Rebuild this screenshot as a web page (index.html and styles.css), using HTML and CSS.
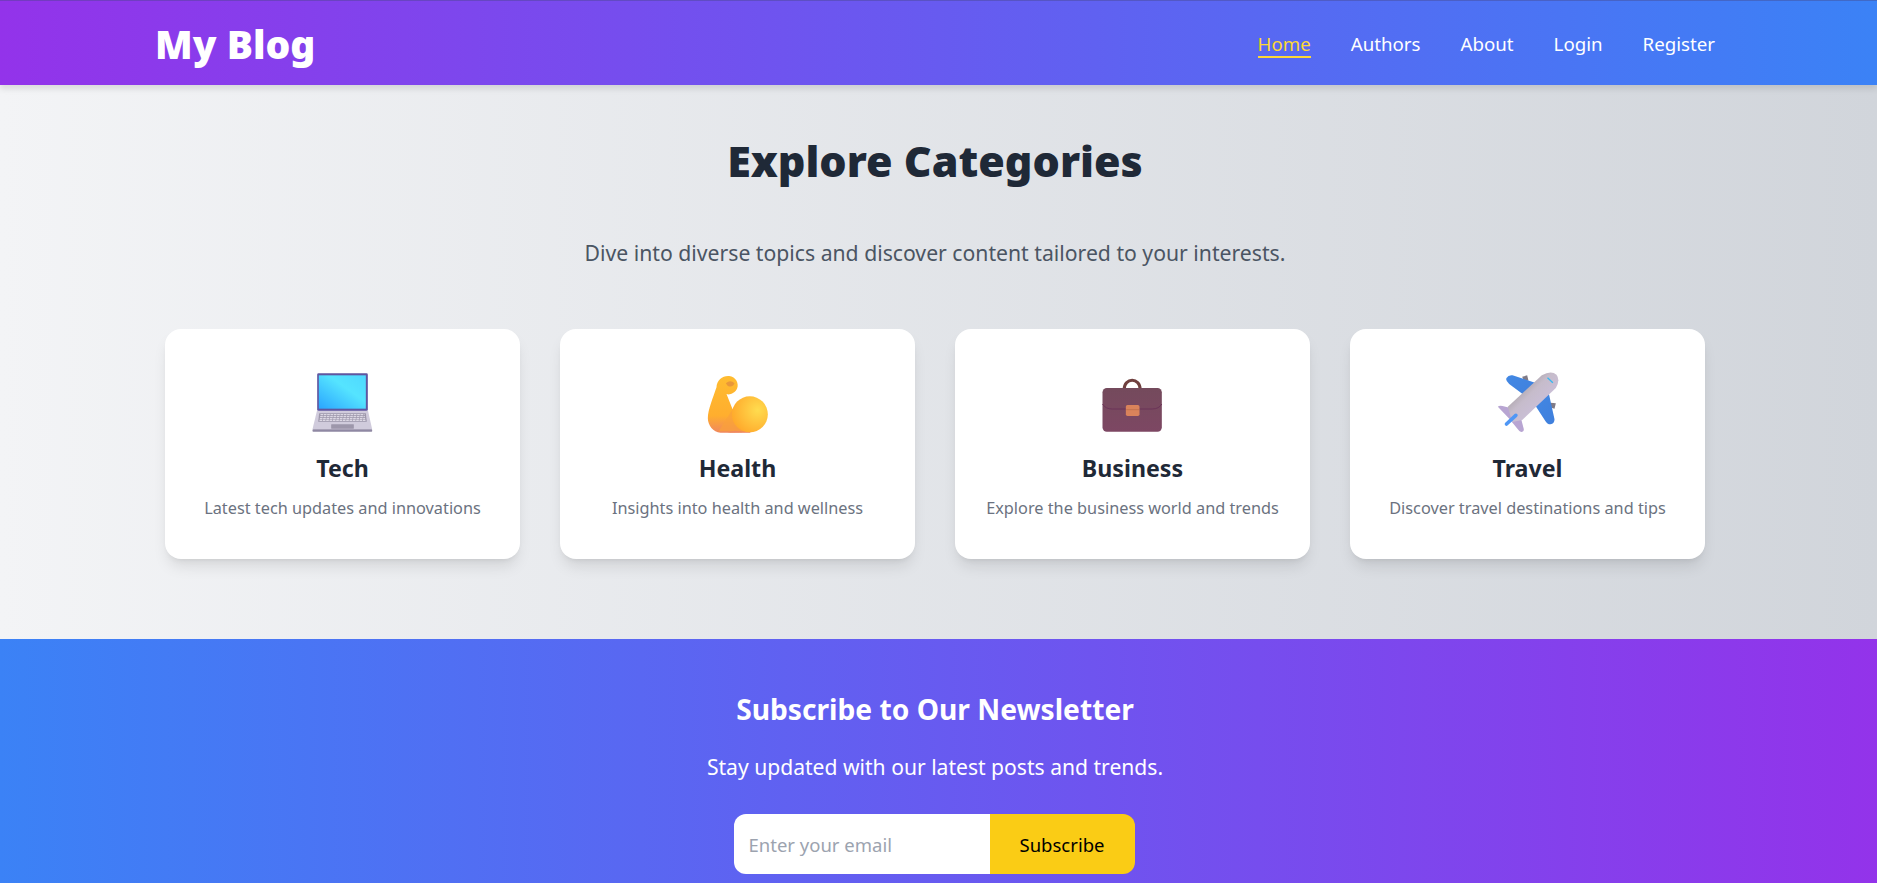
FILE: index.html
```html
<!DOCTYPE html>
<html>
<head>
  <title>My Blog</title>
  <meta charset="utf-8">
  <link rel="stylesheet" href="styles.css">
</head>
<body>
  <header class="topbar">
    <div class="topbar-inner">
      <a class="logo" href="#">My Blog</a>
      <nav class="nav">
        <a class="nav-link active" href="#">Home</a>
        <a class="nav-link" href="#">Authors</a>
        <a class="nav-link" href="#">About</a>
        <a class="nav-link" href="#">Login</a>
        <a class="nav-link" href="#">Register</a>
      </nav>
    </div>
  </header>

  <main class="categories">
    <h1 class="categories-title">Explore Categories</h1>
    <p class="categories-sub">Dive into diverse topics and discover content tailored to your interests.</p>
    <div class="card-grid">
      <div class="card">
        <svg class="card-icon" viewBox="64.5 24 186 198">
          <defs>
            <linearGradient id="screen" x1="0" y1="1" x2="1" y2="0">
              <stop offset="0" stop-color="#2aa5ff"/>
              <stop offset="0.6" stop-color="#55e4ff"/>
              <stop offset="1" stop-color="#4fd8ff"/>
            </linearGradient>
          </defs>
          <path d="M80 150 L232 150 L245 208 L66 208 Z" fill="#d0cbdc"/>
          <rect x="66" y="208" width="179" height="7" rx="2" fill="#8f88a3"/>
          <rect x="80" y="40" width="152" height="112" rx="4" fill="#5f56a0"/>
          <rect x="85" y="46" width="141" height="100" fill="url(#screen)"/>
          <path d="M86 160 L226 160 L229 185 L83 185 Z" fill="#9d97ab"/>
          <path d="M90 164 H222 M89 170 H223 M88 176 H224 M87 181 H225" stroke="#dcd8e4" stroke-width="4" stroke-dasharray="8 2"/>
          <rect x="122" y="193" width="68" height="13" rx="1" fill="#9d97ab"/>
        </svg>
        <h3 class="card-title">Tech</h3>
        <p class="card-text">Latest tech updates and innovations</p>
      </div>
      <div class="card">
        <svg class="card-icon" viewBox="49.5 24 186 198">
          <defs>
            <linearGradient id="arm" x1="0" y1="0" x2="0" y2="1">
              <stop offset="0" stop-color="#ffbc30"/>
              <stop offset="0.7" stop-color="#ffae2e"/>
              <stop offset="1" stop-color="#f0885e"/>
            </linearGradient>
            <radialGradient id="ball" cx="0.72" cy="0.38" r="0.75">
              <stop offset="0" stop-color="#ffdc4f"/>
              <stop offset="1" stop-color="#ffa92b"/>
            </radialGradient>
          </defs>
          <path d="M52 175 C52 150 68 112 78 82 C78 60 98 46 116 48 C136 50 146 70 140 85 C134 100 116 106 108 102 L125 145 L180 218 L90 218 C68 218 52 195 52 175 Z" fill="url(#arm)"/>
          <path d="M125 150 L168 214 L84 214 Z" fill="#f9a13a" opacity="0.7"/>
          <circle cx="178" cy="163" r="54" fill="url(#ball)"/>
          <path d="M135 212 Q165 220 185 217 L110 218 Z" fill="#f0885e" opacity="0.9"/>
          <path d="M106 70 Q120 58 132 70 Q126 84 112 78 Z" fill="#e9973a"/>
        </svg>
        <h3 class="card-title">Health</h3>
        <p class="card-text">Insights into health and wellness</p>
      </div>
      <div class="card">
        <svg class="card-icon" viewBox="49.5 24 186 198">
          <defs>
            <linearGradient id="case" x1="0" y1="0" x2="0" y2="1">
              <stop offset="0" stop-color="#744a5c"/>
              <stop offset="1" stop-color="#7d4763"/>
            </linearGradient>
          </defs>
          <path d="M116 88 C116 52 164 52 164 88" fill="none" stroke="#6f3f3e" stroke-width="9"/>
          <rect x="51" y="84" width="178" height="131" rx="13" fill="url(#case)"/>
          <path d="M51 132 Q60 147 80 147 H200 Q220 147 229 132" fill="none" stroke="#6b3358" stroke-width="3"/>
          <rect x="121" y="135" width="41" height="33" rx="5" fill="#d9835b"/>
          <path d="M122 149 H161" stroke="#b96a48" stroke-width="2"/>
        </svg>
        <h3 class="card-title">Business</h3>
        <p class="card-text">Explore the business world and trends</p>
      </div>
      <div class="card">
        <svg class="card-icon" viewBox="49.5 24 186 198">
          <defs>
            <linearGradient id="body" x1="0.15" y1="0.15" x2="0.8" y2="0.8">
              <stop offset="0" stop-color="#9a9494"/>
              <stop offset="0.45" stop-color="#c6bccb"/>
              <stop offset="1" stop-color="#cdc1de"/>
            </linearGradient>
            <linearGradient id="wing" x1="0" y1="0" x2="1" y2="1">
              <stop offset="0" stop-color="#4288e4"/>
              <stop offset="1" stop-color="#3f7fdc"/>
            </linearGradient>
          </defs>
          <path d="M125 50 L140 46 L144 62 L130 62 Z M210 128 L226 130 L222 146 L208 142 Z" fill="#7f7a86"/>
          <path d="M78 54 Q84 44 96 46 L175 72 L140 112 L86 72 Q74 62 78 54 Z" fill="url(#wing)"/>
          <path d="M160 130 L204 96 L222 178 Q222 192 210 193 Q200 193 194 182 Z" fill="url(#wing)"/>
          <path d="M52 140 Q56 136 66 138 L115 150 L130 208 Q130 216 122 216 Q116 214 112 208 L85 175 Z" fill="#b8a5d2"/>
          <path d="M184 46 Q212 30 228 44 Q240 60 226 84 L125 180 L95 186 L82 140 Z" fill="url(#body)"/>
          <path d="M78 192 L106 166" stroke="#4f97f5" stroke-width="11" stroke-linecap="round"/>
          <path d="M201 53 L217 68" stroke="#35b8f0" stroke-width="4"/>
        </svg>
        <h3 class="card-title">Travel</h3>
        <p class="card-text">Discover travel destinations and tips</p>
      </div>
    </div>
  </main>

  <section class="newsletter">
    <h2 class="newsletter-title">Subscribe to Our Newsletter</h2>
    <p class="newsletter-text">Stay updated with our latest posts and trends.</p>
    <form class="newsletter-form">
      <input class="newsletter-input" type="email" placeholder="Enter your email">
      <button class="newsletter-btn" type="button">Subscribe</button>
    </form>
  </section>
</body>
</html>
```

FILE: styles.css
```css
html, body {
  margin: 0;
  height: 883px;
  overflow: hidden;
}

body {
  display: flex;
  flex-direction: column;
  font-family: "Noto Sans", "Open Sans", sans-serif;
}

/* top bar */
.topbar {
  position: relative;
  z-index: 2;
  flex: none;
  height: 85px;
  box-sizing: border-box;
  padding-right: 7px;
  background: linear-gradient(to right, #9333ea, #3b82f6);
  border-top: 1px solid rgba(70, 70, 130, 0.4);
  box-shadow: 0 4px 6px rgba(0, 0, 0, 0.1);
}

.topbar-inner {
  display: flex;
  justify-content: space-between;
  align-items: center;
  width: 1560px;
  height: 84px;
  margin: 0 auto;
}

.logo {
  color: #fff;
  font-size: 39px;
  font-weight: 900;
  text-decoration: none;
}

.nav {
  display: flex;
  gap: 40px;
  margin-top: 3px;
}

.nav-link {
  color: #fff;
  font-size: 18.7px;
  text-decoration: none;
}

.nav-link.active {
  color: #fdd835;
  border-bottom: 2px solid #fdd835;
}

/* categories */
.categories {
  flex: none;
  height: 554px;
  box-sizing: border-box;
  padding: 48px 7px 0 0;
  text-align: center;
  background: linear-gradient(to right, #f3f4f6, #d1d5db);
}

.categories-title {
  margin: 0 0 50px;
  color: #1f2937;
  font-size: 43px;
  line-height: 56px;
  font-weight: 900;
}

.categories-sub {
  margin: 0 0 62px;
  color: #4b5563;
  font-size: 21.2px;
  line-height: 28px;
}

.card-grid {
  display: grid;
  grid-template-columns: repeat(4, 355px);
  gap: 40px;
  justify-content: center;
}

.card {
  height: 230px;
  box-sizing: border-box;
  padding-top: 39px;
  background: #fff;
  border-radius: 16px;
  box-shadow: 0 10px 15px -3px rgba(0, 0, 0, 0.1), 0 4px 6px -4px rgba(0, 0, 0, 0.1);
}

.card-icon {
  display: block;
  width: 62px;
  height: 66px;
  margin: 0 auto;
  filter: blur(0.3px);
}

.card-title {
  margin: 18px 0 12px;
  color: #1f2937;
  font-size: 23.2px;
  line-height: 32px;
  font-weight: 700;
}

.card-text {
  margin: 0;
  color: #6b7280;
  font-size: 16.3px;
  line-height: 24px;
}

/* newsletter */
.newsletter {
  flex: 1;
  padding: 52px 7px 0 0;
  text-align: center;
  color: #fff;
  background: linear-gradient(to right, #3b82f6, #9333ea);
}

.newsletter-title {
  margin: 0 0 26px;
  font-size: 28.2px;
  line-height: 36px;
  font-weight: 700;
}

.newsletter-text {
  margin: 0 0 33px;
  font-size: 21.1px;
  line-height: 28px;
}

.newsletter-form {
  display: flex;
  width: 401px;
  height: 60px;
  margin: 0 auto;
  transform: translateX(-1px);
}

.newsletter-input {
  width: 256px;
  box-sizing: border-box;
  padding: 0 15px;
  border: 0;
  border-radius: 12px 0 0 12px;
  font-family: inherit;
  font-size: 18.5px;
  background: #fff;
}

.newsletter-input::placeholder {
  color: #9ca3af;
}

.newsletter-btn {
  width: 145px;
  border: 0;
  border-radius: 0 12px 12px 0;
  color: #000;
  font-family: inherit;
  font-size: 18.5px;
  background: #facc15;
}
```
